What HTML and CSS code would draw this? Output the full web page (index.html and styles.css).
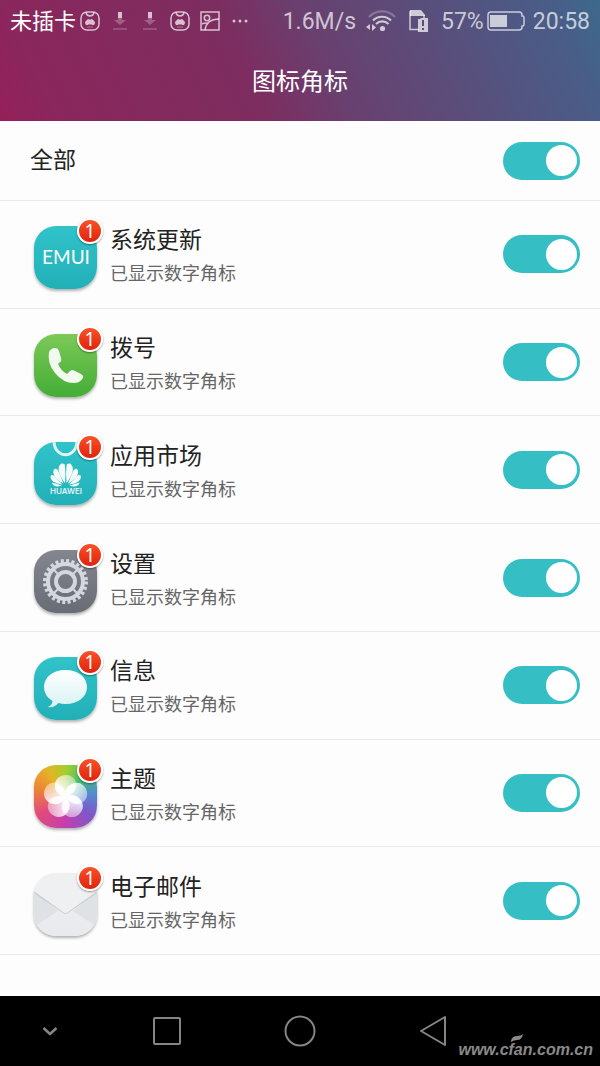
FILE: index.html
```html
<!DOCTYPE html>
<html lang="zh-CN">
<head>
    <meta charset="UTF-8">
    <meta name="viewport" content="width=device-width, initial-scale=1.0">
    <title>图标角标</title>
    <link rel="stylesheet" href="styles.css">
</head>
<body>
    <header class="header">
        <div class="status-bar">
            <span class="carrier">未插卡</span>
            <div class="notices">
                <svg width="20" height="20" viewBox="0 0 20 20" fill="none" stroke="currentColor">
                    <rect x="1" y="1" width="18" height="18" rx="6" stroke-width="1.5"/>
                    <path d="M6 1.500c1 4.500 7 4.500 8 0" stroke-width="1.500"/>
                    <path d="M6 14q-2-3 0-4 1-2 3-2l1 1 1-1q2 0 3 2 2 1 0 4h-2l-1-1-1 1-1-1-1 1z" fill="currentColor" stroke="none"/>
                    <path d="M7 16h6" stroke-width="1" opacity=".5"/>
                </svg>
                <svg width="20" height="20" viewBox="0 0 20 20" fill="currentColor">
                    <path d="M8 1h4v6H8z"/>
                    <path d="M8 7h4v2h4l-6 5-6-5h4z" opacity=".35"/>
                    <path d="M3 17h14v2H3z" opacity=".25"/>
                </svg>
                <svg width="20" height="20" viewBox="0 0 20 20" fill="currentColor">
                    <path d="M8 1h4v6H8z"/>
                    <path d="M8 7h4v2h4l-6 5-6-5h4z" opacity=".35"/>
                    <path d="M3 17h14v2H3z" opacity=".25"/>
                </svg>
                <svg width="20" height="20" viewBox="0 0 20 20" fill="none" stroke="currentColor">
                    <rect x="1" y="1" width="18" height="18" rx="6" stroke-width="1.5"/>
                    <path d="M6 1.500c1 4.500 7 4.500 8 0" stroke-width="1.500"/>
                    <path d="M6 14q-2-3 0-4 1-2 3-2l1 1 1-1q2 0 3 2 2 1 0 4h-2l-1-1-1 1-1-1-1 1z" fill="currentColor" stroke="none"/>
                    <path d="M7 16h6" stroke-width="1" opacity=".5"/>
                </svg>
                <svg width="20" height="20" viewBox="0 0 20 20" fill="none" stroke="currentColor" stroke-width="1.500">
                    <rect x="1" y="1" width="18" height="18"/>
                    <circle cx="7" cy="7" r="2.700"/>
                    <path d="M5 19C6 12 11 8 19 8M2 13q4-2 6 0"/>
                </svg>
                <svg width="20" height="20" viewBox="0 0 20 20" fill="currentColor">
                    <circle cx="4" cy="10" r="1.500"/>
                    <circle cx="10" cy="10" r="1.500"/>
                    <circle cx="16" cy="10" r="1.500"/>
                </svg>
            </div>
            <div class="system">
                <span>1.6M/s</span>
                <svg class="wifi" width="30" height="22" viewBox="0 0 30 22" fill="none" stroke="currentColor" stroke-width="2.200">
                    <path d="M3 7C10-.5 22-.5 29 7" opacity=".35"/>
                    <path d="M7 10.500c5-5 13-5 18 0"/>
                    <path d="M10 14c3.500-3.500 9-3.500 12.500 0"/>
                    <circle cx="16.500" cy="18.500" r="2.600" fill="currentColor" stroke="none"/>
                    <path d="M4 14v6l-4-3zM6 14v7l4-3.500z" fill="currentColor" stroke="none"/>
                </svg>
                <svg class="sim" width="20" height="22" viewBox="0 0 20 22">
                    <path d="M1 1v18.500h9M15 5v3" fill="none" stroke="currentColor" stroke-width="1.500"/>
                    <path d="M1 0h11l4 5v1H1z" fill="currentColor"/>
                    <path fill-rule="evenodd" d="M9 9h2l1-1h7v14H9zM13 10v6h2v-6zM13 18v2h2v-2z" fill="currentColor"/>
                </svg>
                <span>57%</span>
                <svg class="battery" width="38" height="20" viewBox="0 0 38 20">
                    <path d="M4 1h28q3 0 3 3v1h1q1 0 1 2v6q0 2-1 2h-1v1q0 3-3 3H4q-3 0-3-3V4q0-3 3-3z" fill="none" stroke="currentColor" stroke-width="1.500"/>
                    <path d="M3 4h17v12H3z" fill="currentColor"/>
                </svg>
                <span>20:58</span>
            </div>
        </div>
        <h1>图标角标</h1>
    </header>

    <main class="settings">
        <div class="row row-all">
            <label class="name" for="all">全部</label>
            <input class="switch" type="checkbox" id="all" checked>
        </div>

        <ul class="app-list">
            <li class="row">
                <div class="app-icon">
                    <svg class="tile teal" viewBox="0 0 63 63">
                        <text class="emui" x="32" y="38" text-anchor="middle">EMUI</text>
                    </svg>
                    <span class="badge">1</span>
                </div>
                <label class="info" for="update">
                    <span class="name">系统更新</span>
                    <span class="state">已显示数字角标</span>
                </label>
                <input class="switch" type="checkbox" id="update" checked>
            </li>
            <li class="row">
                <div class="app-icon">
                    <svg class="tile green" viewBox="0 0 63 63">
                        <path d="M15 18q2-4 6-4 3 0 4 3l2 7q1 3-1 4l-2 2q3 7 9 10l3-3q2-2 5 0l6 3q3 2 2 4-3 5-9 5-11 0-19-10-8-10-6-21z" fill="#f2faf0"/>
                    </svg>
                    <span class="badge">1</span>
                </div>
                <label class="info" for="phone">
                    <span class="name">拨号</span>
                    <span class="state">已显示数字角标</span>
                </label>
                <input class="switch" type="checkbox" id="phone" checked>
            </li>
            <li class="row">
                <div class="app-icon">
                    <svg class="tile teal" viewBox="0 0 63 63">
                        <path d="M20 0c1 17 22 17 23 0" fill="none" stroke="#e2f7f8" stroke-width="3"/>
                        <g fill="#f4fcfc">
                            <path d="M31 41c-6-7-8-15-5-18 1-2 5-2 5 1q1 8 0 17z"/>
                            <path d="M32.500 41c6-7 8-15 5-18-1-2-5-2-5 1q-1 8 0 17z"/>
                            <path d="M29.500 41.500c-8-4-11-9-10-13 1-3 4-2 5 1z"/>
                            <path d="M34 41.500c8-4 11-9 10-13-1-3-4-2-5 1z"/>
                            <path d="M28.500 42.500c-8-1-12-4-12-8 1-3 4-1 5 1z"/>
                            <path d="M35 42.500c8-1 12-4 12-8-1-3-4-1-5 1z"/>
                            <path d="M28 43.500c-5 2-9 1-10-3z"/>
                            <path d="M35.500 43.500c5 2 9 1 10-3z"/>
                        </g>
                        <text class="huawei" x="32" y="52" text-anchor="middle">HUAWEI</text>
                    </svg>
                    <span class="badge">1</span>
                </div>
                <label class="info" for="market">
                    <span class="name">应用市场</span>
                    <span class="state">已显示数字角标</span>
                </label>
                <input class="switch" type="checkbox" id="market" checked>
            </li>
            <li class="row">
                <div class="app-icon">
                    <svg class="tile gray" viewBox="0 0 63 63">
                        <g fill="none" stroke="#d3d7e0">
                            <circle cx="31.500" cy="31.500" r="20.500" stroke-width="4" stroke-dasharray="3 2.367"/>
                            <circle cx="31.500" cy="31.500" r="17.500" stroke-width="4"/>
                            <circle cx="31.500" cy="31.500" r="9.500" stroke-width="4"/>
                            <path d="M20 20l5 5M43 20l-5 5M20 43l5-5M43 43l-5-5" stroke-width="2"/>
                        </g>
                    </svg>
                    <span class="badge">1</span>
                </div>
                <label class="info" for="settings">
                    <span class="name">设置</span>
                    <span class="state">已显示数字角标</span>
                </label>
                <input class="switch" type="checkbox" id="settings" checked>
            </li>
            <li class="row">
                <div class="app-icon">
                    <svg class="tile teal" viewBox="0 0 63 63">
                        <defs>
                            <linearGradient id="bubble" x1="0" y1="0" x2="0" y2="1">
                                <stop offset="0" stop-color="#fff"/>
                                <stop offset="1" stop-color="#d8f3f3"/>
                            </linearGradient>
                        </defs>
                        <path d="M31.500 13C44 13 53 20 53 30s-9 17-21.500 17q-4 0-7-1-4 5-11 4 5-2 5-6Q10 39 10 30c0-10 9-17 21.500-17z" fill="url(#bubble)"/>
                    </svg>
                    <span class="badge">1</span>
                </div>
                <label class="info" for="message">
                    <span class="name">信息</span>
                    <span class="state">已显示数字角标</span>
                </label>
                <input class="switch" type="checkbox" id="message" checked>
            </li>
            <li class="row">
                <div class="app-icon">
                    <svg class="tile rainbow" viewBox="0 0 63 63">
                        <defs>
                            <linearGradient id="petal" x1="0" y1="1" x2="1" y2="0">
                                <stop offset="0" stop-color="#fff"/>
                                <stop offset=".4" stop-color="#fff" stop-opacity=".8"/>
                                <stop offset="1" stop-color="#fff" stop-opacity=".35"/>
                            </linearGradient>
                            <path id="blade" d="M31.500 32C22 31 18 21 23 14c5-6 15-5 18 1 4 8-1 14-9.500 17z" fill="url(#petal)"/>
                            <path id="fold" d="M31.500 32C30 24 35 19 42 20c-1 6-4 9-10.500 12z" fill="#fff" fill-opacity=".55"/>
                        </defs>
                        <use href="#blade"/>
                        <use href="#blade" transform="rotate(72 31.500 32)"/>
                        <use href="#blade" transform="rotate(144 31.500 32)"/>
                        <use href="#blade" transform="rotate(216 31.500 32)"/>
                        <use href="#blade" transform="rotate(288 31.500 32)"/>
                        <use href="#fold"/>
                        <use href="#fold" transform="rotate(72 31.500 32)"/>
                        <use href="#fold" transform="rotate(144 31.500 32)"/>
                        <use href="#fold" transform="rotate(216 31.500 32)"/>
                        <use href="#fold" transform="rotate(288 31.500 32)"/>
                    </svg>
                    <span class="badge">1</span>
                </div>
                <label class="info" for="theme">
                    <span class="name">主题</span>
                    <span class="state">已显示数字角标</span>
                </label>
                <input class="switch" type="checkbox" id="theme" checked>
            </li>
            <li class="row">
                <div class="app-icon">
                    <svg class="tile white" viewBox="0 0 63 63">
                        <path d="M0 18l24 20L0 54zM63 18L39 38l24 16z" fill="#dfe2e5"/>
                        <path d="M0 19l29 20q2.500 2 5 0l29-20" fill="none" stroke="#cdd1d5" stroke-width="2"/>
                        <path d="M0 0h63v18L34 39q-2.500 2-5 0L0 18z" fill="#eff0f2"/>
                    </svg>
                    <span class="badge">1</span>
                </div>
                <label class="info" for="mail">
                    <span class="name">电子邮件</span>
                    <span class="state">已显示数字角标</span>
                </label>
                <input class="switch" type="checkbox" id="mail" checked>
            </li>
        </ul>
    </main>

    <nav class="nav-bar">
        <button type="button" aria-label="收起">
            <svg width="32" height="32" viewBox="0 0 32 32"><path d="M9.500 13l6.500 6 6.500-6" stroke-width="2.500"/></svg>
        </button>
        <button type="button" aria-label="最近任务">
            <svg width="32" height="32" viewBox="0 0 32 32"><rect x="3" y="3" width="26" height="26" rx="1"/></svg>
        </button>
        <button type="button" aria-label="主页">
            <svg width="32" height="32" viewBox="0 0 32 32"><circle cx="16" cy="16" r="14.500"/></svg>
        </button>
        <button type="button" aria-label="返回">
            <svg width="32" height="32" viewBox="0 0 32 32"><path d="M28 2v28L4 16z"/></svg>
        </button>
        <div class="watermark">
            <svg class="leaf" width="12" height="8" viewBox="0 0 12 8"><path d="M0 7Q1 2 6 2q4 0 6-2-1 6-6 6-3 0-6 2z"/></svg>
            www.cfan.com.cn
        </div>
    </nav>
</body>
</html>
```

FILE: styles.css
```css
* {
    box-sizing: border-box;
}
body {
    margin: 0;
    min-height: 100vh;
    display: flex;
    flex-direction: column;
    background-color: #fdfdfd;
    color: #222;
    font-family: Roboto, "Noto Sans CJK SC", sans-serif;
}

/* header */
.header {
    background: linear-gradient(65deg, #951f5a 0%, #8a275c 9%, #7d2d60 41%, #69406f 54%, #4a5c87 91%, #3d698d 100%);
    color: #fff;
    padding-bottom: 21px;
}
.status-bar {
    display: flex;
    justify-content: space-between;
    align-items: center;
    height: 42px;
    padding: 0 10px;
}
.status-bar span {
    padding-top: 2px;
}
.carrier {
    font-size: 22px;
    line-height: 32px;
}
.notices {
    display: flex;
    gap: 10px;
    margin-left: 4px;
    margin-right: auto;
    color: rgba(255, 255, 255, 0.7);
}
.system {
    display: flex;
    align-items: center;
    font-size: 23px;
    line-height: 32px;
    color: rgba(255, 255, 255, 0.7);
}
.wifi {
    margin: 0 13px 0 10px;
}
.sim {
    margin-right: 12px;
}
.battery {
    margin: 0 8px 0 3px;
}
h1 {
    margin: 0;
    padding-top: 22px;
    font-size: 24px;
    font-weight: 400;
    line-height: 36px;
    text-align: center;
}

/* list */
.settings {
    flex: 1;
    display: flex;
    flex-direction: column;
    padding-bottom: 41px;
}
.app-list {
    flex: 1;
    display: flex;
    flex-direction: column;
    margin: 0;
    padding: 0;
    list-style: none;
}
.row {
    flex: 1;
    display: flex;
    align-items: center;
    padding: 0 20px 0 34px;
    border-bottom: 1px solid #e8e8e8;
}
.row-all {
    flex: none;
    justify-content: space-between;
    height: 80px;
    padding-left: 30px;
}
.info {
    flex: 1;
    display: flex;
    flex-direction: column;
    gap: 2px;
    padding: 4px 13px 0;
}
.name {
    font-size: 23px;
    line-height: 34px;
}
.state {
    font-size: 18px;
    line-height: 28px;
    color: #666;
}

/* app icons */
.app-icon {
    position: relative;
    padding-top: 7px;
}
.tile {
    display: block;
    width: 63px;
    height: 63px;
    border-radius: 22px;
    box-shadow: 0 2px 3px rgba(0, 0, 0, 0.3);
}
.teal {
    background: linear-gradient(#30c3c9, #22b0b7);
}
.green {
    background: linear-gradient(#7cc957, #43ad35);
}
.gray {
    background: linear-gradient(#83868e, #686c75);
}
.white {
    background: linear-gradient(#eff0f2, #e8eaed);
}
.rainbow {
    background: conic-gradient(from 0deg, #a5cf2c, #3fbd74 45deg, #558ad0 85deg, #7c58c9 125deg, #c63eae 180deg, #e04a7e 235deg, #ed8336 285deg, #e4b326 325deg, #a5cf2c);
}
.emui {
    font-family: Lato, sans-serif;
    font-size: 19px;
    fill: #fff;
}
.huawei {
    font-family: Inter, sans-serif;
    font-size: 8px;
    font-weight: 500;
    fill: #f4fcfc;
}
.badge {
    position: absolute;
    top: -1px;
    right: -6px;
    width: 26px;
    height: 26px;
    border: 2px solid #fff;
    border-radius: 50%;
    background: linear-gradient(#fa5128, #e0230b);
    box-shadow: 0 1px 2px rgba(0, 0, 0, 0.4);
    color: #fff;
    font-family: "Noto Sans", sans-serif;
    font-size: 19px;
    line-height: 22px;
    text-align: center;
}

/* switches */
.switch {
    appearance: none;
    display: flex;
    align-items: center;
    width: 77px;
    height: 38px;
    margin: 0;
    padding: 0 3px;
    border-radius: 19px;
    background-color: #ccc;
    cursor: pointer;
}
.switch::before {
    content: "";
    width: 31px;
    height: 31px;
    border-radius: 50%;
    background-color: #fff;
}
.switch:checked {
    justify-content: flex-end;
    background-color: #35bfc5;
}

/* navigation bar */
.nav-bar {
    position: relative;
    display: grid;
    grid-template-columns: 3fr 4fr 4fr 4fr 3fr;
    height: 70px;
    background-color: #000;
}
.nav-bar button {
    display: flex;
    justify-content: center;
    align-items: center;
    padding: 0;
    border: none;
    background: none;
    cursor: pointer;
}
.nav-bar button svg {
    fill: none;
    stroke: #858585;
    stroke-width: 2;
    stroke-linejoin: round;
}
.watermark {
    position: absolute;
    right: 7px;
    bottom: 6px;
    color: #8a8a8a;
    font-family: "Liberation Sans", Arial, sans-serif;
    font-size: 16px;
    font-style: italic;
    font-weight: bold;
    line-height: 20px;
}
.leaf {
    position: absolute;
    top: -6px;
    left: 53px;
    fill: #8a8a8a;
}
```
